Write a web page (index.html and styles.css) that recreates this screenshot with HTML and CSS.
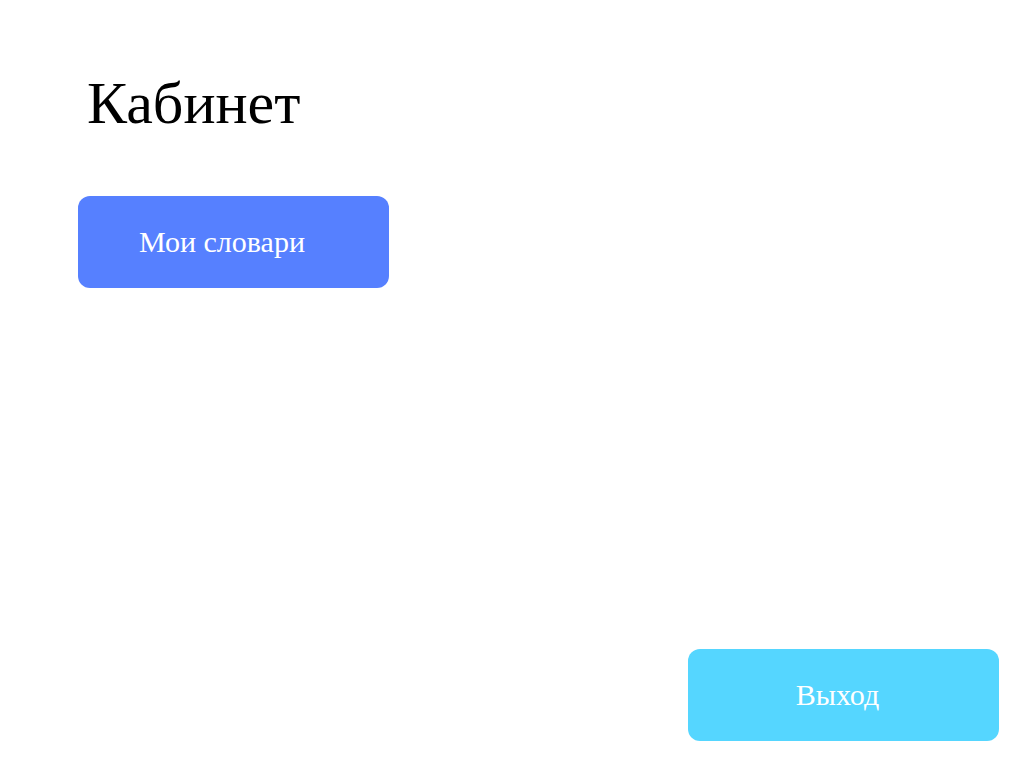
FILE: index.html
```html
<!DOCTYPE html>
<html lang="ru">
<head>
<meta charset="utf-8">
<title>Кабинет</title>
<link rel="stylesheet" href="styles.css">
</head>
<body>
<div class="page">
  <h1 class="title">Кабинет</h1>
  <button class="btn btn-dicts">Мои словари</button>
  <button class="btn btn-exit">Выход</button>
</div>
</body>
</html>
```
FILE: styles.css
```css
html, body {
  margin: 0;
  padding: 0;
  background: #fff;
}
.page {
  box-sizing: border-box;
  min-height: 100vh;
  display: flex;
  flex-direction: column;
  align-items: flex-start;
  padding: 73px 25px 27px 78px;
  font-family: "Liberation Serif", "Times New Roman", serif;
}
.title {
  margin: 0 0 63px 9px;
  font-size: 60px;
  line-height: 1;
  font-weight: 400;
  color: #000;
}
.btn {
  width: 311px;
  height: 92px;
  border: none;
  border-radius: 12px;
  color: #fff;
  font-family: "Liberation Serif", "Times New Roman", serif;
  font-size: 30px;
  line-height: 1;
  display: flex;
  align-items: center;
  justify-content: center;
  cursor: pointer;
}
.btn-dicts {
  background: #5680ff;
  padding: 0 23px 0 0;
}
.btn-exit {
  background: #55d6ff;
  margin-top: auto;
  align-self: flex-end;
  padding: 0 12px 0 0;
}
```
